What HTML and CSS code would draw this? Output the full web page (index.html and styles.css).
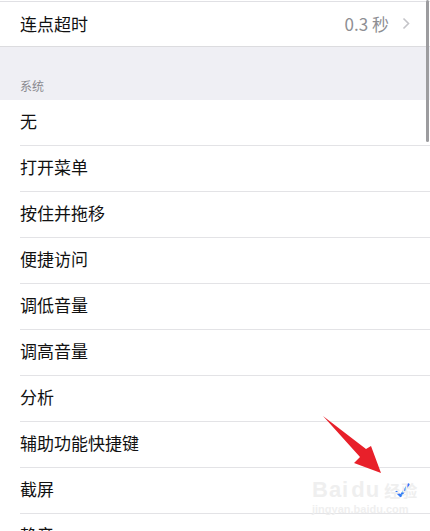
FILE: index.html
```html
<!DOCTYPE html>
<html>
  <head>
    <title>截屏</title>
    <meta charset="utf-8" />
    <link rel="stylesheet" href="styles.css">
  </head>
  <body>
    <div class="page">
      <div class="group group-top">
        <div class="row row-full">
          <span class="label">连点超时</span>
          <span class="value">0.3 秒</span>
          <span class="chevron">
            <svg width="8" height="13" viewBox="0 0 8 13"><path d="M1.5 1.5 L6.5 6.5 L1.5 11.5" fill="none" stroke="#c4c4c8" stroke-width="1.6" /></svg>
          </span>
        </div>
      </div>

      <div class="section-head">系统</div>

      <div class="group">
        <div class="row"><span class="label">无</span></div>
        <div class="row"><span class="label">打开菜单</span></div>
        <div class="row"><span class="label">按住并拖移</span></div>
        <div class="row"><span class="label">便捷访问</span></div>
        <div class="row"><span class="label">调低音量</span></div>
        <div class="row"><span class="label">调高音量</span></div>
        <div class="row"><span class="label">分析</span></div>
        <div class="row"><span class="label">辅助功能快捷键</span></div>
        <div class="row">
          <span class="label">截屏</span>
          <span class="check">
            <svg width="15" height="15" viewBox="0 0 15 15"><path d="M1.5 9 L5.5 13 L13.5 1.5" fill="none" stroke="#3478f6" stroke-width="2.2" stroke-linecap="round" stroke-linejoin="round" /></svg>
          </span>
        </div>
        <div class="row"><span class="label">静音</span></div>
      </div>

      <div class="scrollbar"></div>

      <svg class="arrow" width="70" height="65" viewBox="0 0 70 65">
        <path d="M2 1 L45 34 L50 31 L60 58 L33 48 L39 42 Z" fill="#e8202a" />
      </svg>

      <div class="watermark">
        <div class="wm-top"><span>Bai</span><span class="wm-du">du</span><span class="wm-cn">经验</span></div>
        <div class="wm-url">jingyan.baidu.com</div>
      </div>
    </div>
  </body>
</html>
```

FILE: styles.css
```css
body {
  margin: 0;
  background: #fff;
  font-family: "Noto Sans CJK SC", "Noto Sans", sans-serif;
}
.page {
  position: relative;
  width: 430px;
  height: 531px;
  overflow: hidden;
  padding-top: 1px;
  box-sizing: border-box;
}
.group {
  background: #fff;
}
.group-top {
  border-top: 1px solid #e0e0e4;
  border-bottom: 1px solid #dcdcdf;
}
.row {
  display: flex;
  align-items: center;
  height: 46px;
  box-sizing: border-box;
  margin-left: 20px;
  padding-right: 22px;
  padding-bottom: 4px;
  border-bottom: 1px solid #e3e3e6;
  font-size: 17px;
  color: #111;
}
.row-full {
  height: 44px;
  padding-bottom: 2px;
  border-bottom: none;
}
.label {
  flex: 1;
}
.value {
  color: #8e8e93;
  margin-right: 13px;
}
.chevron {
  display: flex;
  margin-right: -2px;
}
.check {
  display: flex;
  margin-right: -2px;
  margin-top: 4px;
}
.section-head {
  background: #efeff4;
  height: 53px;
  box-sizing: border-box;
  padding: 30px 20px 0;
  font-size: 12px;
  color: #8a8a8f;
}
.scrollbar {
  position: absolute;
  top: 0;
  right: 1px;
  width: 3px;
  height: 142px;
  background: #9c9c9f;
  border-radius: 2px;
}
.arrow {
  position: absolute;
  left: 321px;
  top: 415px;
}
.watermark {
  position: absolute;
  left: 312px;
  top: 478px;
  color: #efefef;
  font-family: "Liberation Sans", sans-serif;
}
.wm-top {
  font-size: 22px;
  font-weight: bold;
  line-height: 24px;
  letter-spacing: 1px;
}
.wm-du {
  margin-left: 2px;
}
.wm-cn {
  font-family: "Noto Sans CJK SC", sans-serif;
  font-size: 16px;
  margin-left: 4px;
}
.wm-url {
  font-size: 11px;
  line-height: 14px;
  font-weight: bold;
}
```
